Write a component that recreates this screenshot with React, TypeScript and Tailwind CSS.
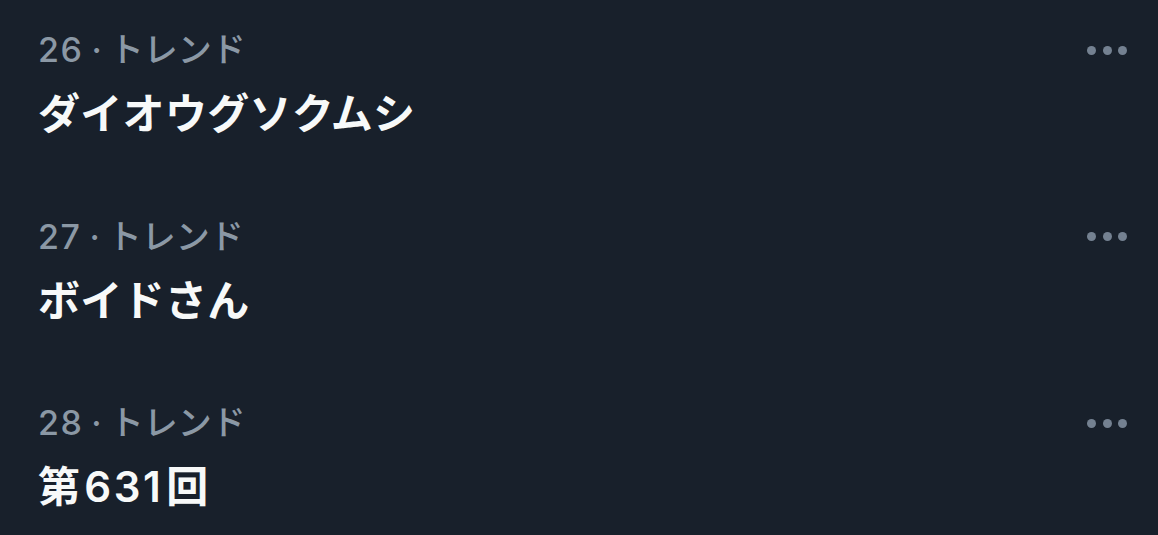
const trends = [
  { rank: 26, label: 'トレンド', title: 'ダイオウグソクムシ' },
  { rank: 27, label: 'トレンド', title: 'ボイドさん' },
  { rank: 28, label: 'トレンド', title: '第631回' },
]

function MoreDots() {
  return (
    <div className="flex items-center gap-[6.5px] pr-[31px]">
      <span className="w-[9px] h-[9px] rounded-full bg-[#748191]" />
      <span className="w-[9px] h-[9px] rounded-full bg-[#748191]" />
      <span className="w-[9px] h-[9px] rounded-full bg-[#748191]" />
    </div>
  )
}

// digits sit a bit apart from the kanji around them, like the mac font does
function Title({ text }: { text: string }) {
  const parts = text.split(/(\d+)/).filter(Boolean)
  return (
    <>
      {parts.map((p, i) =>
        /^\d+$/.test(p) ? (
          <span key={i} className="pl-[4px] pr-[3px] tracking-[2.5px]">
            {p}
          </span>
        ) : (
          <span key={i}>{p}</span>
        ),
      )}
    </>
  )
}

export default function App() {
  return (
    <div
      className="w-[1158px] h-[535px] bg-[#18202b] overflow-hidden"
      style={{ fontFamily: 'Inter, "Noto Sans CJK JP", sans-serif' }}
    >
      {trends.map((t) => (
        <div key={t.rank} className="pl-[38px] pt-[30px] pb-[48.5px]">
          <div className="flex items-center justify-between h-[40px]">
            <div className="text-[34px] leading-[40px] font-medium text-[#8b98a5]">
              <span className="tracking-[1.5px]">{t.rank}</span>
              <span className="px-[8px]">·</span>
              {t.label}
            </div>
            <MoreDots />
          </div>
          <div className="mt-[20px] text-[42px] leading-[48px] font-semibold text-[#f7f9f9] tracking-[0.3px]">
            <Title text={t.title} />
          </div>
        </div>
      ))}
    </div>
  )
}
